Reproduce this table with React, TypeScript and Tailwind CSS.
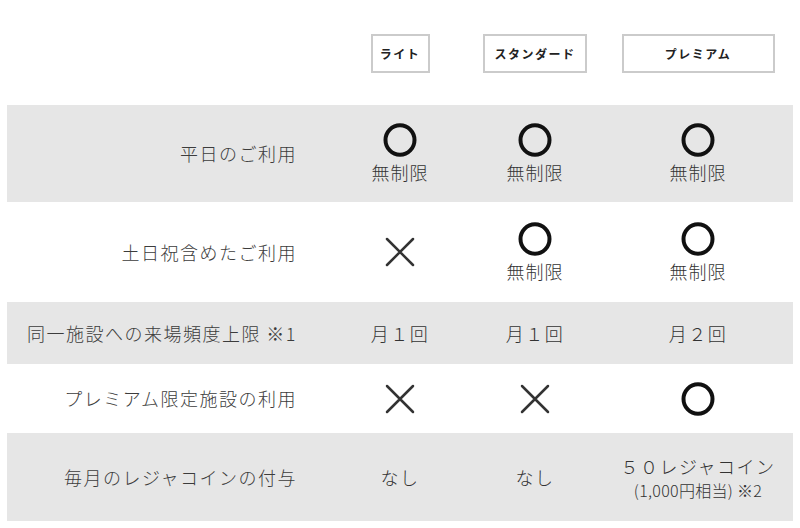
import React from 'react';

type Cell = 'ok' | 'okUnlimited' | 'ng' | string | { main: string; sub: string };

interface Row {
  label: string;
  height: string;
  gray: boolean;
  cells: Cell[];
}

const rows: Row[] = [
  { label: '平日のご利用', height: 'h-[97px]', gray: true, cells: ['okUnlimited', 'okUnlimited', 'okUnlimited'] },
  { label: '土日祝含めたご利用', height: 'h-[100px]', gray: false, cells: ['ng', 'okUnlimited', 'okUnlimited'] },
  { label: '同一施設への来場頻度上限 ※1', height: 'h-[62px]', gray: true, cells: ['月１回', '月１回', '月２回'] },
  { label: 'プレミアム限定施設の利用', height: 'h-[69px]', gray: false, cells: ['ng', 'ng', 'ok'] },
  {
    label: '毎月のレジャコインの付与',
    height: 'h-[88px]',
    gray: true,
    cells: ['なし', 'なし', { main: '５０レジャコイン', sub: '(1,000円相当) ※2' }],
  },
];

const plans = [
  { name: 'ライト', width: 'w-[59px]' },
  { name: 'スタンダード', width: 'w-[104px]' },
  { name: 'プレミアム', width: 'w-[153px]' },
];

function Circle() {
  return (
    <svg width="34" height="34" viewBox="0 0 34 34" className="block">
      <ellipse cx="17" cy="17" rx="14.5" ry="14.8" fill="none" stroke="#111" strokeWidth="4" />
    </svg>
  );
}

function Cross() {
  return (
    <svg width="30" height="30" viewBox="0 0 30 30" className="block">
      <path d="M2 2 L28 28 M28 2 L2 28" stroke="#333" strokeWidth="2.5" strokeLinecap="round" />
    </svg>
  );
}

function renderCell(cell: Cell) {
  if (cell === 'okUnlimited') {
    return (
      <div className="flex flex-col items-center">
        <Circle />
        <span className="mt-[3px] text-[18px] leading-[24px] tracking-[1px] text-[#333]">無制限</span>
      </div>
    );
  }
  if (cell === 'ok') return <Circle />;
  if (cell === 'ng') return <Cross />;
  if (typeof cell === 'string') {
    return <span className="text-[18px] leading-[24px] tracking-[1.5px] text-[#333]">{cell}</span>;
  }
  return (
    <div className="flex flex-col items-center">
      <span className="text-[18px] leading-[26px] tracking-[1.5px] text-[#333]">{cell.main}</span>
      <span className="text-[16px] leading-[22px] tracking-[0.3px] text-[#333]">{cell.sub}</span>
    </div>
  );
}

export default function App() {
  return (
    <div className="w-[800px] h-[528px] bg-white overflow-hidden font-light font-['Noto_Sans_CJK_JP',sans-serif]">
      <div className="ml-[7px] w-[786px]">
        <div className="grid grid-cols-[326px_134px_136px_190px] pt-[34px] pb-[32px]">
          <div />
          {plans.map((p) => (
            <div key={p.name} className="flex justify-center">
              <div
                className={`${p.width} h-[39px] border-2 border-[#cbcbcb] flex items-center justify-center text-[12px] font-bold tracking-[1.5px] text-[#222]`}
              >
                {p.name}
              </div>
            </div>
          ))}
        </div>
        {rows.map((r) => (
          <div
            key={r.label}
            className={`grid grid-cols-[326px_134px_136px_190px] ${r.height} ${r.gray ? 'bg-[#e6e6e6]' : 'bg-white'}`}
          >
            <div className="flex items-center justify-end pr-[36px] text-[18px] tracking-[1.5px] text-[#3c3c3c]">
              {r.label}
            </div>
            {r.cells.map((c, i) => (
              <div key={i} className="flex items-center justify-center">
                {renderCell(c)}
              </div>
            ))}
          </div>
        ))}
      </div>
    </div>
  );
}
